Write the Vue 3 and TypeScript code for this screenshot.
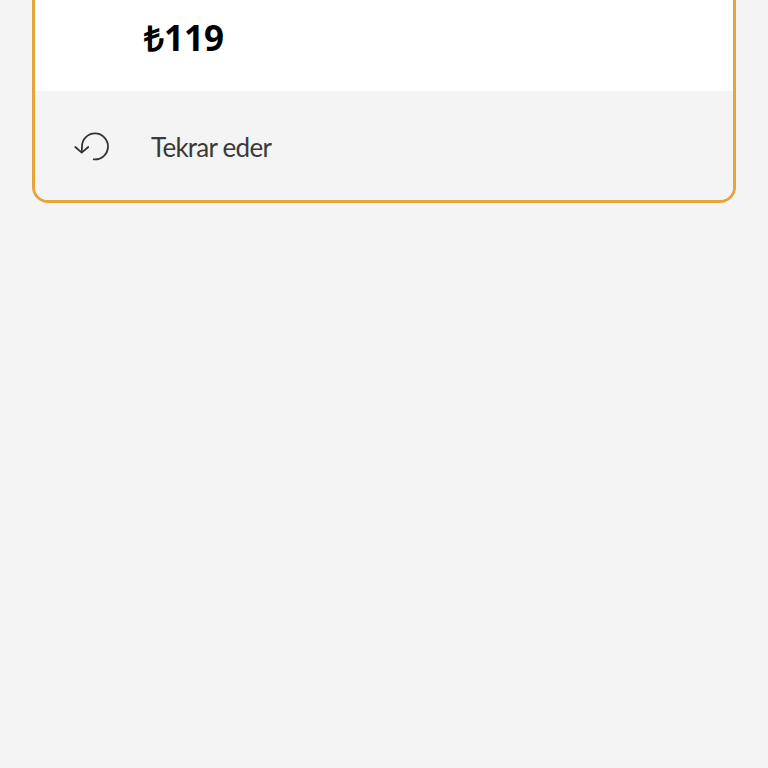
<script setup lang="ts">
const price = '₺119'
const label = 'Tekrar eder'
</script>

<template>
  <div class="page">
    <section class="card">
      <div class="top">
        <span class="price">{{ price }}</span>
      </div>
      <div class="bottom">
        <svg class="icon" width="36" height="30" viewBox="0 0 36 30" fill="none" stroke="#333" stroke-width="1.8" stroke-linecap="round" stroke-linejoin="round">
          <path d="M7.7 20 L8 15 A13 13 0 1 1 19.7 27.4" />
          <path d="M1.3 15 L7.7 20.6 L14.3 15" />
        </svg>
        <span class="label">{{ label }}</span>
      </div>
    </section>
  </div>
</template>

<style>
html, body { margin: 0; background: #f4f4f4; }
</style>

<style scoped>
.page {
  height: 768px;
  box-sizing: border-box;
  padding: 0 32px;
  background: #f4f4f4;
  overflow: hidden;
}
.card {
  height: 203px;
  box-sizing: border-box;
  border: 3px solid #e6a43a;
  border-top: 0;
  border-radius: 0 0 16px 16px;
  overflow: hidden;
  display: flex;
  flex-direction: column;
}
.top {
  height: 91px;
  background: #fff;
  box-sizing: border-box;
  padding: 14px 0 0 109px;
}
.price {
  display: block;
  font-family: "Open Sans", sans-serif;
  font-weight: 700;
  font-size: 35px;
  line-height: 47px;
  color: #000;
}
.bottom {
  flex: 1;
  display: flex;
  align-items: center;
  padding: 3px 0 0 39px;
  background: #f4f4f4;
}
.icon { flex: none; }
.label {
  margin-left: 41px;
  font-family: "Lato", sans-serif;
  font-size: 26px;
  letter-spacing: -0.75px;
  color: #3a3a3a;
}
</style>
